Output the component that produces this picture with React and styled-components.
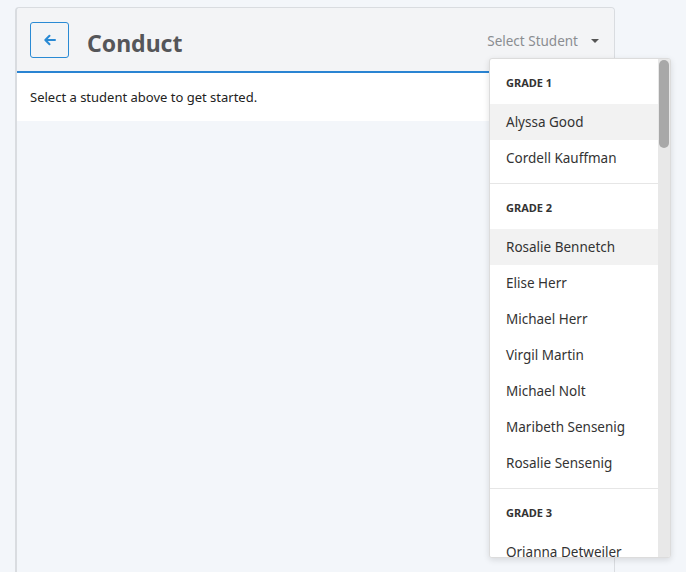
import React from "react";
import styled, { createGlobalStyle } from "styled-components";

const GlobalStyle = createGlobalStyle`
  html, body {
    margin: 0;
    padding: 0;
    background: #f3f6fa;
    font-family: "Noto Sans", "Open Sans", sans-serif;
    color: #212529;
  }
`;

const grades = [
  { name: "GRADE 1", students: ["Alyssa Good", "Cordell Kauffman"], active: "Alyssa Good" },
  {
    name: "GRADE 2",
    students: [
      "Rosalie Bennetch",
      "Elise Herr",
      "Michael Herr",
      "Virgil Martin",
      "Michael Nolt",
      "Maribeth Sensenig",
      "Rosalie Sensenig",
    ],
    active: "Rosalie Bennetch",
  },
  { name: "GRADE 3", students: ["Orianna Detweiler", "Lydia Hoover"] },
];

const Page = () => (
  <>
    <GlobalStyle />
    <StPage>
      <StCard>
        <StHeader>
          <StBackBtn aria-label="Back">
            <svg width="14" height="14" viewBox="0 0 14 14" fill="none">
              <path
                d="M12 7H2.5M6.5 2.8L2.3 7l4.2 4.2"
                stroke="#2a8ad4"
                strokeWidth="2"
                strokeLinecap="round"
                strokeLinejoin="round"
              />
            </svg>
          </StBackBtn>
          <StTitle>Conduct</StTitle>
          <StSelect>
            <span>Select Student</span>
            <StCaret />
            <StMenu>
              <StMenuScroll>
                {grades.map((g, i) => (
                  <StGroup key={g.name} last={i === grades.length - 1}>
                    <StGroupLabel>{g.name}</StGroupLabel>
                    {g.students.map((s) => (
                      <StOption key={s} active={s === g.active}>
                        {s}
                      </StOption>
                    ))}
                  </StGroup>
                ))}
              </StMenuScroll>
              <StScrollbar>
                <StThumb />
              </StScrollbar>
            </StMenu>
          </StSelect>
        </StHeader>
        <StBody>Select a student above to get started.</StBody>
      </StCard>
    </StPage>
  </>
);

export default Page;

const StPage = styled.div`
  height: 572px;
  overflow: hidden;
  padding: 7px 0 0 15px;
  box-sizing: border-box;
`;

const StCard = styled.div`
  width: 600px;
  height: 600px;
  box-sizing: border-box;
  border: 1px solid #d9dce0;
  border-left-width: 2px;
  border-radius: 4px;
  background: #f3f6fa;
`;

const StHeader = styled.div`
  height: 63px;
  display: flex;
  align-items: center;
  padding: 0 14px 0 13px;
  background: #f3f4f6;
  border-bottom: 2px solid #2a84d2;
  border-radius: 4px 4px 0 0;
  position: relative;
`;

const StBackBtn = styled.button`
  width: 39px;
  height: 36px;
  box-sizing: border-box;
  border: 1px solid #2a8ad4;
  border-radius: 3px;
  background: #f3f4f6;
  display: flex;
  align-items: center;
  justify-content: center;
  padding: 0;
  margin-top: 1px;
`;

const StTitle = styled.h1`
  margin: 6px 0 0 18px;
  font-size: 23px;
  font-weight: 700;
  color: #555659;
  flex: 1;
`;

const StSelect = styled.div`
  display: flex;
  align-items: center;
  font-size: 13.5px;
  color: #8a8d91;
  margin-right: 1px;
  margin-top: 3px;
`;

const StCaret = styled.span`
  margin-left: 13px;
  width: 0;
  height: 0;
  border-left: 4px solid transparent;
  border-right: 4px solid transparent;
  border-top: 4px solid #555;
`;

const StMenu = styled.div`
  position: absolute;
  top: 50px;
  left: 472px;
  width: 180px;
  height: 498px;
  background: #fff;
  border: 1px solid #dcdcdc;
  border-radius: 3px;
  box-shadow: 0 2px 6px rgba(0, 0, 0, 0.12);
  display: flex;
  overflow: hidden;
  z-index: 2;
`;

const StMenuScroll = styled.div`
  flex: 1;
  overflow: hidden;
`;

const StGroup = styled.div`
  padding-bottom: 7px;
  border-bottom: ${(p) => (p.last ? "none" : "1px solid #e6e6e6")};
`;

const StGroupLabel = styled.div`
  height: 45px;
  padding: 2px 16px 0;
  box-sizing: border-box;
  display: flex;
  align-items: center;
  font-size: 11px;
  font-weight: 700;
  color: #333;
`;

const StOption = styled.div`
  height: 36px;
  padding: 0 16px;
  display: flex;
  align-items: center;
  font-size: 13.5px;
  color: #333;
  background: ${(p) => (p.active ? "#f2f2f2" : "#fff")};
`;

const StScrollbar = styled.div`
  width: 12px;
  background: #e8e8e8;
  padding: 1px 1px 0 1px;
  box-sizing: border-box;
`;

const StThumb = styled.div`
  height: 88px;
  background: #a8a8a8;
  border-radius: 5px;
`;

const StBody = styled.div`
  height: 48px;
  background: #fff;
  padding: 0 13px;
  display: flex;
  align-items: center;
  font-size: 13px;
  color: #222;
`;
